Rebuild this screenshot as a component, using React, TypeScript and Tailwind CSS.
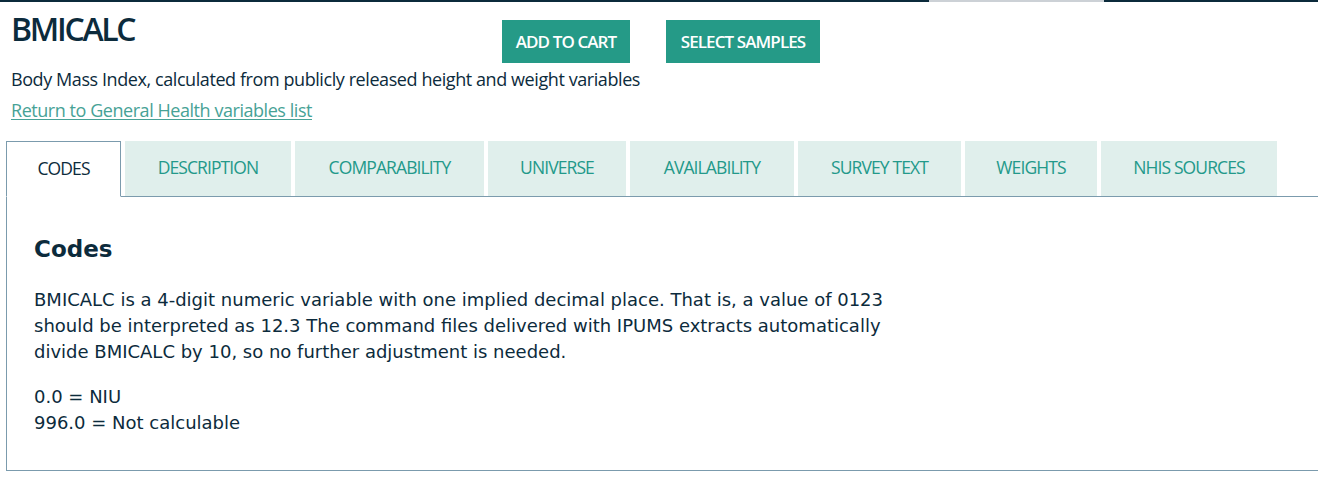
import React from "react";

const tabs = [
  { label: "CODES", w: "w-[116px]" },
  { label: "DESCRIPTION", w: "w-[166px]" },
  { label: "COMPARABILITY", w: "w-[189px]" },
  { label: "UNIVERSE", w: "w-[138px]" },
  { label: "AVAILABILITY", w: "w-[164px]" },
  { label: "SURVEY TEXT", w: "w-[163px]" },
  { label: "WEIGHTS", w: "w-[132px]" },
  { label: "NHIS SOURCES", w: "w-[176px]" },
];

export default function App() {
  return (
    <div className="w-[1318px] h-[487px] bg-white overflow-hidden text-[#0c2b3c]">
      {/* top strip */}
      <div className="flex h-[2px]">
        <div className="w-[929px] bg-[#0b2a3b]" />
        <div className="w-[175px] bg-[#ccd1d6]" />
        <div className="flex-1 bg-[#0b2a3b]" />
      </div>

      {/* header */}
      <div className="pl-[11px] font-['Open_Sans',sans-serif]">
        <div className="flex items-start">
          <h1 className="w-[491px] pt-[7px] text-[32px] leading-[40px] font-semibold tracking-[-2.3px]">
            BMICALC
          </h1>
          <div className="flex gap-9 pt-[18px]">
            <button className="h-[43px] w-[128px] bg-[#259a87] text-white text-[17px] font-semibold tracking-[-0.9px]">
              ADD TO CART
            </button>
            <button className="h-[43px] w-[154px] bg-[#259a87] text-white text-[17px] font-semibold tracking-[-0.9px]">
              SELECT SAMPLES
            </button>
          </div>
        </div>
        <p className="mt-[2px] text-[18px] leading-[28px] tracking-[-0.42px]">
          Body Mass Index, calculated from publicly released height and weight variables
        </p>
        <a href="#" className="block mt-[5px] text-[18px] leading-[24px] tracking-[-0.45px] text-[#47a296] underline underline-offset-2">
          Return to General Health variables list
        </a>
      </div>

      {/* tabs */}
      <div className="mt-[19px] ml-[6px] flex gap-1 border-b border-[#7b9bad] font-['Open_Sans',sans-serif]">
        {tabs.map((t, i) =>
          i === 0 ? (
            <div
              key={t.label}
              className="w-[115px] h-[56px] -mb-px pb-[2px] flex items-center justify-center bg-white border border-[#7b9bad] border-b-white text-[17.5px] tracking-[-0.9px] text-[#0c2b3c]"
            >
              {t.label}
            </div>
          ) : (
            <div
              key={t.label}
              className={`${t.w} h-[55px] pb-[2px] flex items-center justify-center bg-[#e0efec] text-[17.5px] tracking-[-0.9px] text-[#23998a]`}
            >
              {t.label}
            </div>
          )
        )}
      </div>

      {/* panel */}
      <div className="ml-[6px] h-[274px] border-l border-b border-[#7b9bad] pl-[27px] pt-[37px] font-['DejaVu_Sans',sans-serif]">
        <h2 className="text-[23px] leading-[30px] font-bold">Codes</h2>
        <p className="mt-[23px] w-[860px] text-[18px] leading-[26px]">
          BMICALC is a 4-digit numeric variable with one implied decimal place. That is, a value of 0123
          should be interpreted as 12.3 The command files delivered with IPUMS extracts automatically
          divide BMICALC by 10, so no further adjustment is needed.
        </p>
        <p className="mt-[19px] text-[18px] leading-[26px]">
          0.0 = NIU
          <br />
          996.0 = Not calculable
        </p>
      </div>
    </div>
  );
}
